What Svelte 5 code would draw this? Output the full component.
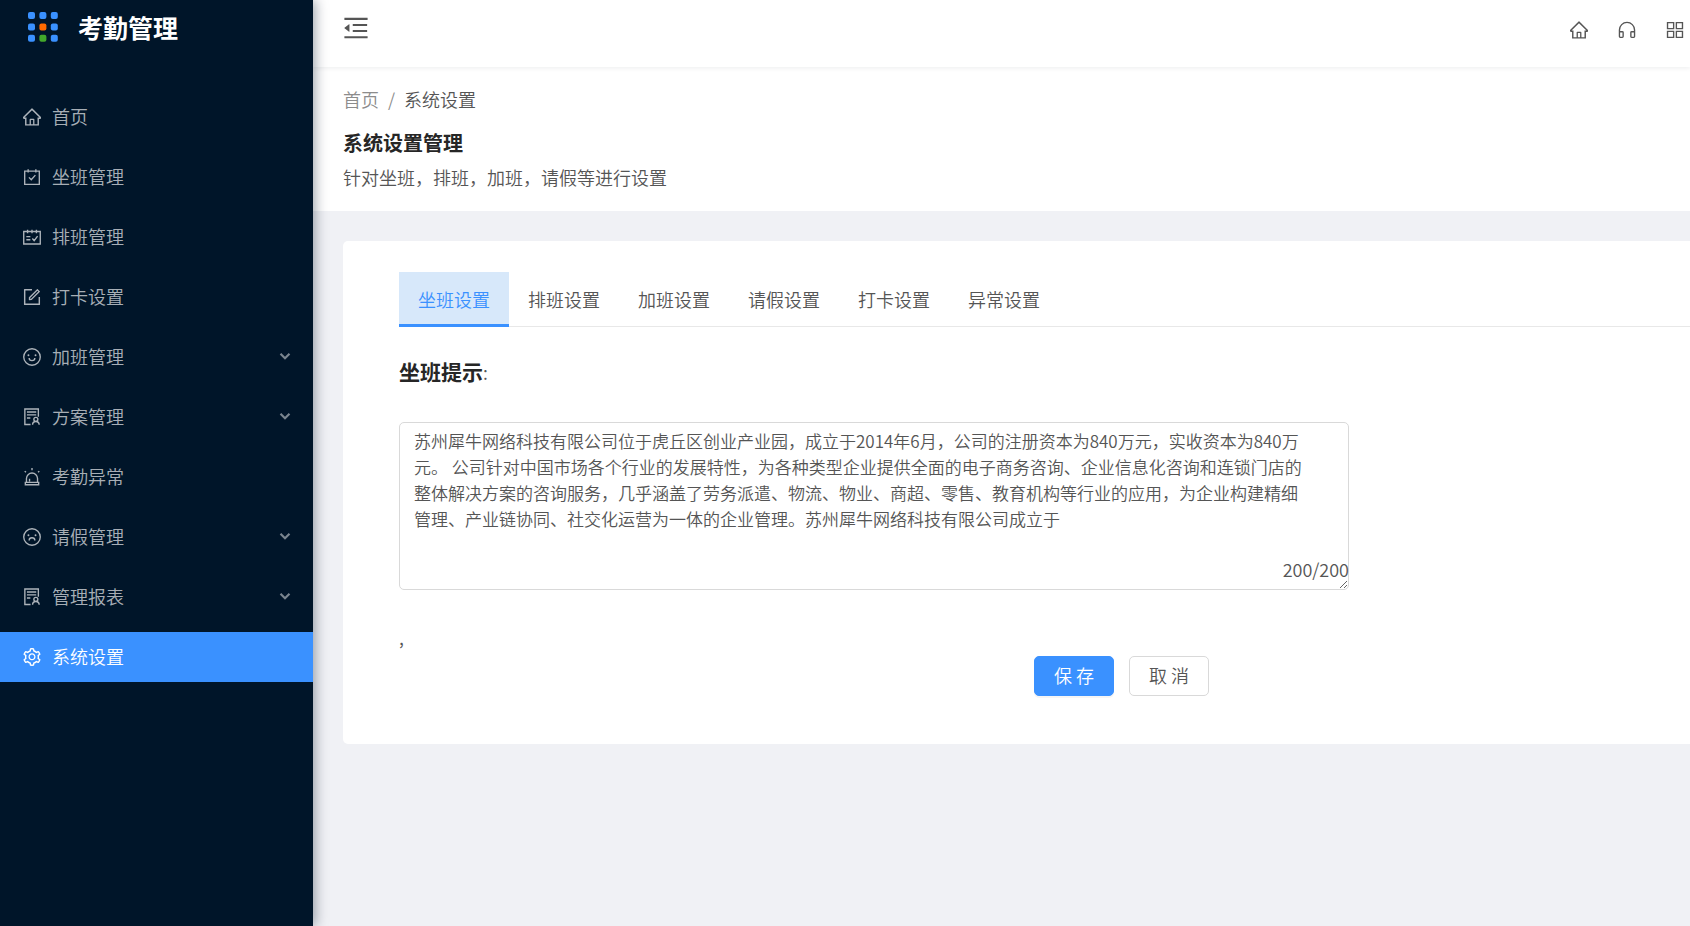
<script>
  const icons = {
    home: {
      fill: 'M946.5 505L560.1 118.8l-25.9-25.9a31.5 31.5 0 0 0-44.4 0L77.5 505a63.9 63.9 0 0 0-18.8 46c.4 35.2 29.7 63.3 64.9 63.3h42.5V940h691.8V614.3h43.4c17.1 0 33.2-6.7 45.3-18.8a63.6 63.6 0 0 0 18.7-45.3c0-17-6.7-33.1-18.9-45.2zM568 868H456V664h112v204zm217.9-325.7V868H632V640c0-22.1-17.9-40-40-40H432c-22.1 0-40 17.9-40 40v228H238.1V542.3h-96l370-369.7 23.1 23.1L882 542.3h-96.1z',
    },
    calendar: {
      line: 'M148 220H876V876H148ZM320 120V290M704 120V290M360 530L476 650L680 420',
    },
    schedule: {
      line: 'M100 240H924V860H100ZM292 150V320M512 150V320M732 150V320M230 490H430M230 650H430M530 590L620 690L790 470',
    },
    form: {
      fill: 'M904 512h-56c-4.4 0-8 3.6-8 8v320H184V184h320c4.4 0 8-3.6 8-8v-56c0-4.4-3.6-8-8-8H144c-17.7 0-32 14.3-32 32v736c0 17.7 14.3 32 32 32h736c17.7 0 32-14.3 32-32V520c0-4.4-3.6-8-8-8zM355.9 534.9L354 653.8c-.1 8.9 7.1 16.2 16 16.2h.4l118-2.9c2-.1 4-.9 5.4-2.3l415.9-415c3.1-3.1 3.1-8.2 0-11.3L785.4 114.3c-1.6-1.6-3.6-2.3-5.7-2.3s-4.1.8-5.7 2.3l-415.8 415a8.3 8.3 0 0 0-2.3 5.6zm63.5 23.6L779.7 199l45.2 45.1-360.5 359.7-45.7 1.1.7-46.4z',
    },
    smile: {
      line: 'M100 512a412 412 0 1 0 824 0a412 412 0 1 0-824 0M370 560a142 130 0 0 0 284 0',
      fill: 'M288 421a48 48 0 1 0 96 0a48 48 0 1 0-96 0M640 421a48 48 0 1 0 96 0a48 48 0 1 0-96 0',
    },
    frown: {
      line: 'M100 512a412 412 0 1 0 824 0a412 412 0 1 0-824 0M370 680a142 130 0 0 1 284 0',
      fill: 'M288 421a48 48 0 1 0 96 0a48 48 0 1 0-96 0M640 421a48 48 0 1 0 96 0a48 48 0 1 0-96 0',
    },
    audit: {
      line: 'M440 884H156V116H828V500M260 264H724M260 404H724M260 560H430M604 628a100 100 0 1 0 200 0a100 100 0 1 0-200 0M540 900a164 164 0 0 1 328 0',
    },
    alert: {
      line: 'M236 780V590a276 276 0 0 1 552 0V780M180 780H844V900H180ZM390 740V600M512 70V180M150 220L210 280M874 220L814 280',
    },
    setting: {
      fill: 'M924.8 625.7l-65.5-56c3.1-19 4.7-38.4 4.7-57.8s-1.6-38.8-4.7-57.8l65.5-56a32.03 32.03 0 0 0 9.3-35.2l-.9-2.6a443.74 443.74 0 0 0-79.7-137.9l-1.8-2.1a32.12 32.12 0 0 0-35.1-9.5l-81.3 28.9c-30-24.6-63.5-44-99.7-57.6l-15.7-85a32.05 32.05 0 0 0-25.8-25.7l-2.7-.5c-52.1-9.4-106.9-9.4-159 0l-2.7.5a32.05 32.05 0 0 0-25.8 25.7l-15.8 85.4a351.86 351.86 0 0 0-99 57.4l-81.9-29.1a32 32 0 0 0-35.1 9.5l-1.8 2.1a446.02 446.02 0 0 0-79.7 137.9l-.9 2.6c-4.5 12.5-.8 26.5 9.3 35.2l66.3 56.6c-3.1 18.8-4.6 38-4.6 57.1 0 19.2 1.5 38.4 4.6 57.1L99 625.5a32.03 32.03 0 0 0-9.3 35.2l.9 2.6c18.1 50.4 44.9 96.9 79.7 137.9l1.8 2.1a32.12 32.12 0 0 0 35.1 9.5l81.9-29.1c29.8 24.5 63.1 43.9 99 57.4l15.8 85.4a32.05 32.05 0 0 0 25.8 25.7l2.7.5a449.4 449.4 0 0 0 159 0l2.7-.5a32.05 32.05 0 0 0 25.8-25.7l15.7-85a350 350 0 0 0 99.7-57.6l81.3 28.9a32 32 0 0 0 35.1-9.5l1.8-2.1c34.8-41.1 61.6-87.5 79.7-137.9l.9-2.6c4.5-12.3.8-26.3-9.3-35zM788.3 465.9c2.5 15.1 3.8 30.6 3.8 46.1s-1.3 31-3.8 46.1l-6.6 40.1 74.7 63.9a370.03 370.03 0 0 1-42.6 73.6L721 702.8l-31.4 25.8c-23.9 19.6-50.5 35-79.3 45.8l-38.1 14.3-17.9 97a377.5 377.5 0 0 1-85 0l-17.9-97.2-37.8-14.5c-28.5-10.8-55-26.2-78.7-45.7l-31.4-25.9-93.4 33.2c-17-22.9-31.2-47.6-42.6-73.6l75.5-64.5-6.5-40c-2.4-14.9-3.7-30.3-3.7-45.5 0-15.3 1.2-30.6 3.7-45.5l6.5-40-75.5-64.5c11.3-26.1 25.6-50.7 42.6-73.6l93.4 33.2 31.4-25.9c23.7-19.5 50.2-34.9 78.7-45.7l37.9-14.3 17.9-97.2c28.1-3.2 56.8-3.2 85 0l17.9 97 38.1 14.3c28.7 10.8 55.4 26.2 79.3 45.8l31.4 25.8 92.8-32.9c17 22.9 31.2 47.6 42.6 73.6L781.8 426l6.5 39.9zM512 326c-97.2 0-176 78.8-176 176s78.8 176 176 176 176-78.8 176-176-78.8-176-176-176zm79.2 255.2A111.6 111.6 0 0 1 512 614c-29.9 0-58-11.7-79.2-32.8A111.6 111.6 0 0 1 400 502c0-29.9 11.7-58 32.8-79.2C454 401.6 482.1 390 512 390c29.9 0 58 11.6 79.2 32.8A111.6 111.6 0 0 1 624 502c0 29.9-11.7 58-32.8 79.2z',
    },
    fold: {
      fill: 'M408 442h480c4.4 0 8-3.6 8-8v-56c0-4.4-3.6-8-8-8H408c-4.4 0-8 3.6-8 8v56c0 4.4 3.6 8 8 8zm-8 204c0 4.4 3.6 8 8 8h480c4.4 0 8-3.6 8-8v-56c0-4.4-3.6-8-8-8H408c-4.4 0-8 3.6-8 8v56zm504-486H120c-4.4 0-8 3.6-8 8v56c0 4.4 3.6 8 8 8h784c4.4 0 8-3.6 8-8v-56c0-4.4-3.6-8-8-8zm0 632H120c-4.4 0-8 3.6-8 8v56c0 4.4 3.6 8 8 8h784c4.4 0 8-3.6 8-8v-56c0-4.4-3.6-8-8-8zM115.4 518.9L271.7 642c5.8 4.6 14.4.5 14.4-6.9V388.9c0-7.4-8.5-11.5-14.4-6.9L115.4 505.1a8.74 8.74 0 0 0 0 13.8z',
    },
    headset: {
      line: 'M136 820V510a376 376 0 0 1 752 0V820M136 600H280q40 0 40 40V840q0 40-40 40H176q-40 0-40-40ZM888 600H744q-40 0-40 40V840q0 40 40 40H848q40 0 40-40Z',
    },
    apps: {
      line: 'M140 148H444V444H140ZM580 148H884V444H580ZM140 580H444V876H140ZM580 580H884V876H580Z',
    },
    down: {
      line: 'M260 390L512 640L764 390',
    },
  };

  const menu = [
    { name: '首页', icon: 'home' },
    { name: '坐班管理', icon: 'calendar' },
    { name: '排班管理', icon: 'schedule' },
    { name: '打卡设置', icon: 'form' },
    { name: '加班管理', icon: 'smile', sub: true },
    { name: '方案管理', icon: 'audit', sub: true },
    { name: '考勤异常', icon: 'alert' },
    { name: '请假管理', icon: 'frown', sub: true },
    { name: '管理报表', icon: 'audit', sub: true },
    { name: '系统设置', icon: 'setting' },
  ];

  const tools = [
    { name: '主页', icon: 'home' },
    { name: '客服', icon: 'headset' },
    { name: '应用', icon: 'apps' },
  ];

  const tabs = ['坐班设置', '排班设置', '加班设置', '请假设置', '打卡设置', '异常设置'];
  const dots = [0, 1, 2, 3, 4, 5, 6, 7, 8];
  const maxLength = 200;

  let activeMenu = $state('系统设置');
  let activeTab = $state('坐班设置');
  let count = $state(200);
  let tip = $state(
    '苏州犀牛网络科技有限公司位于虎丘区创业产业园，成立于2014年6月，公司的注册资本为840万元，实收资本为840万元。 公司针对中国市场各个行业的发展特性，为各种类型企业提供全面的电子商务咨询、企业信息化咨询和连锁门店的整体解决方案的咨询服务，几乎涵盖了劳务派遣、物流、物业、商超、零售、教育机构等行业的应用，为企业构建精细管理、产业链协同、社交化运营为一体的企业管理。苏州犀牛网络科技有限公司成立于'
  );
</script>

{#snippet icon(name)}
  <svg class="icon icon--{name}" viewBox="64 64 896 896" aria-hidden="true">
    {#if icons[name].fill}
      <path d={icons[name].fill} fill="currentColor" />
    {/if}
    {#if icons[name].line}
      <path class="icon__line" d={icons[name].line} />
    {/if}
  </svg>
{/snippet}

<div class="layout">
  <aside class="sider">
    <div class="logo">
      <svg class="logo__mark" viewBox="0 0 30 30" aria-hidden="true">
        {#each dots as i}
          <rect
            x={(i % 3) * 11.4}
            y={Math.floor(i / 3) * 11.4}
            width="7"
            height="7"
            rx="2"
            fill={i === 4 ? '#ff6a00' : i === 7 ? '#43a82b' : '#3a91ff'}
          />
        {/each}
      </svg>
      <strong class="logo__name">考勤管理</strong>
    </div>

    <nav class="menu">
      {#each menu as item}
        <a
          href="#{item.icon}"
          class="menu__item"
          class:menu__item--active={item.name === activeMenu}
          onclick={() => (activeMenu = item.name)}
        >
          {@render icon(item.icon)}
          <span class="menu__name">{item.name}</span>
          {#if item.sub}
            {@render icon('down')}
          {/if}
        </a>
      {/each}
    </nav>
  </aside>

  <div class="page">
    <header class="topbar">
      <button class="tool tool--fold" aria-label="收起菜单">{@render icon('fold')}</button>
      <div class="tools">
        {#each tools as tool}
          <button class="tool" aria-label={tool.name}>{@render icon(tool.icon)}</button>
        {/each}
      </div>
    </header>

    <section class="intro">
      <nav class="breadcrumb">
        <a class="breadcrumb__link" href="#home">首页</a>
        <span class="breadcrumb__separator">/</span>
        <span>系统设置</span>
      </nav>
      <h1 class="intro__title">系统设置管理</h1>
      <p class="intro__text">针对坐班，排班，加班，请假等进行设置</p>
    </section>

    <main class="card">
      <div class="tabs" role="tablist">
        {#each tabs as tab}
          <button
            class="tabs__tab"
            class:tabs__tab--active={tab === activeTab}
            role="tab"
            aria-selected={tab === activeTab}
            onclick={() => (activeTab = tab)}
          >
            {tab}
          </button>
        {/each}
      </div>

      <form class="form" onsubmit={(e) => e.preventDefault()}>
        <label class="form__label" for="tip"><strong>坐班提示</strong>:</label>
        <div class="field">
          <textarea
            id="tip"
            class="field__input"
            maxlength={maxLength}
            bind:value={tip}
            oninput={() => (count = tip.length)}
          ></textarea>
          <span class="field__count">{count}/{maxLength}</span>
        </div>
        <p class="form__note">,</p>
        <div class="actions">
          <button class="button button--primary" type="submit">保 存</button>
          <button class="button" type="button">取 消</button>
        </div>
      </form>
    </main>
  </div>
</div>

<style>
  :global(body) {
    background: #f0f1f5;
  }

  .layout {
    display: flex;
    min-height: 100vh;
    color: #555;
    font-family: 'Noto Sans CJK SC', sans-serif;
    font-size: 18px;
    font-weight: 350;
    line-height: 26px;
  }

  button,
  textarea {
    color: inherit;
    font: inherit;
  }

  .icon {
    flex: none;
    width: 18px;
    height: 18px;
  }
  .icon__line {
    fill: none;
    stroke: currentColor;
    stroke-width: 68;
  }
  .icon--fold {
    width: 26px;
    height: 26px;
  }
  .icon--down {
    width: 16px;
    height: 16px;
    padding-bottom: 2px;
    opacity: 0.7;
  }
  .icon--down .icon__line {
    stroke-width: 120;
  }

  .sider {
    position: relative;
    z-index: 2;
    flex: none;
    width: 313px;
    background: #001529;
    box-shadow: 2px 0 12px rgba(0, 21, 41, 0.4);
  }

  .logo {
    display: flex;
    align-items: center;
    gap: 20px;
    height: 54px;
    padding-left: 28px;
    color: #fff;
  }
  .logo__mark {
    width: 30px;
    height: 30px;
  }
  .logo__name {
    font-size: 25px;
    font-weight: 700;
  }

  .menu {
    display: flex;
    flex-direction: column;
    gap: 10px;
    padding-top: 38px;
  }
  .menu__item {
    display: flex;
    align-items: center;
    gap: 11px;
    height: 50px;
    padding: 0 20px 0 23px;
    color: rgba(255, 255, 255, 0.68);
    text-decoration: none;
  }
  .menu__item:hover {
    color: #fff;
  }
  .menu__item--active {
    background: #3a91ff;
    color: #fff;
  }
  .menu__name {
    flex: 1;
    padding-bottom: 2px;
  }

  .page {
    flex: 1;
    min-width: 0;
  }

  .topbar {
    position: relative;
    z-index: 1;
    display: flex;
    align-items: center;
    justify-content: space-between;
    height: 67px;
    padding: 0 6px 0 30px;
    box-sizing: border-box;
    background: #fff;
    box-shadow: 0 1px 5px rgba(0, 21, 41, 0.08);
  }
  .tools {
    display: flex;
    gap: 30px;
  }
  .tool {
    display: flex;
    padding: 0 0 8px;
    border: 0;
    background: none;
    cursor: pointer;
  }
  .tool--fold {
    padding-bottom: 12px;
  }

  .intro {
    padding: 18px 30px 21px;
    background: #fff;
  }
  .breadcrumb {
    display: flex;
    gap: 9px;
    line-height: 28px;
  }
  .breadcrumb__link,
  .breadcrumb__separator {
    color: #8c8c8c;
    text-decoration: none;
  }
  .intro__title {
    margin: 14px 0 5px;
    color: #262626;
    font-size: 20px;
    font-weight: 700;
    line-height: 32px;
  }
  .intro__text {
    margin: 0;
  }

  .card {
    margin: 30px 0 0 30px;
    padding: 31px 0 48px 56px;
    border-radius: 5px 0 0 5px;
    background: #fff;
  }

  .tabs {
    display: flex;
    box-shadow: inset 0 -1px #e8e8e8;
  }
  .tabs__tab {
    width: 110px;
    height: 55px;
    padding: 2px 0 0;
    border: 0;
    border-bottom: 3px solid transparent;
    background: none;
    cursor: pointer;
  }
  .tabs__tab--active {
    border-color: #3a91ff;
    background: #d7e8fa;
    color: #3a91ff;
  }

  .form {
    padding-top: 29px;
  }
  .form__label {
    display: block;
    line-height: 30px;
  }
  .form__label strong {
    color: #262626;
    font-size: 21px;
    font-weight: 700;
  }
  .form__note {
    margin: 34px 0 6px;
  }

  .field {
    position: relative;
    max-width: 950px;
    margin-top: 35px;
  }
  .field__input {
    display: block;
    width: 100%;
    height: 168px;
    padding: 5px 40px 5px 14px;
    box-sizing: border-box;
    border: 1px solid #d9d9d9;
    border-radius: 5px;
    outline: 0;
    background: #fff;
    font-size: 17px;
  }
  .field__count {
    position: absolute;
    right: 0;
    bottom: 8px;
    pointer-events: none;
  }

  .actions {
    display: flex;
    justify-content: flex-end;
    gap: 15px;
    max-width: 810px;
  }
  .button {
    width: 80px;
    height: 40px;
    padding: 0 0 2px;
    border: 1px solid #d9d9d9;
    border-radius: 5px;
    background: #fff;
    cursor: pointer;
  }
  .button--primary {
    border-color: #3a91ff;
    background: #3a91ff;
    box-shadow: 0 2px 0 rgba(0, 0, 0, 0.04);
    color: #fff;
  }
</style>
